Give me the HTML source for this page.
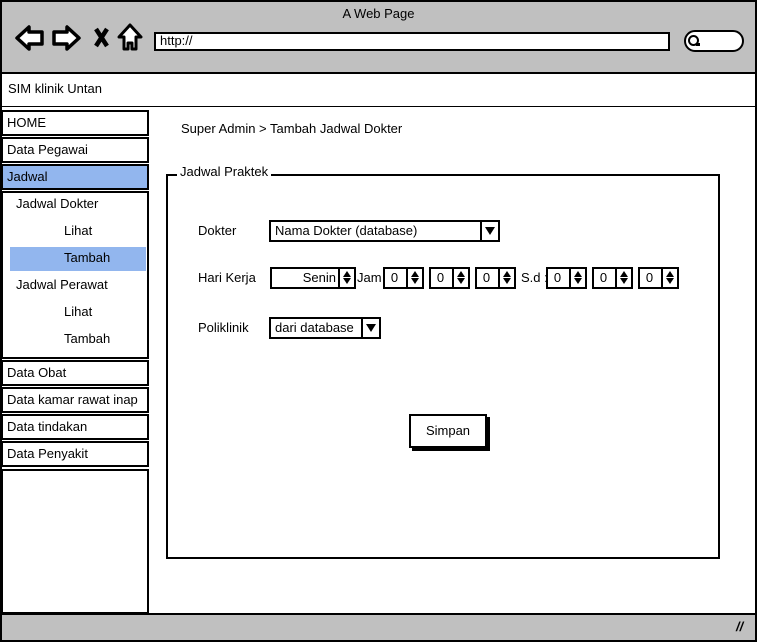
<!DOCTYPE html>
<html><head><meta charset="utf-8"><style>
*{margin:0;padding:0;box-sizing:border-box}
body{width:757px;height:642px;position:relative;background:#fff;font-family:"Liberation Sans",sans-serif;font-size:13px;color:#000;overflow:hidden}
.a{position:absolute}
.b{position:absolute;border:2px solid #000;background:#fff}
.t{position:absolute;white-space:nowrap;line-height:16px}
.m{position:absolute;left:1px;width:148px;height:26px;border:2px solid #000;background:#fff;padding-left:4px;line-height:22px}
.sp{position:absolute;height:22px;border:2px solid #000;background:#fff;top:267px}
.sp .v{position:absolute;right:18px;top:0;line-height:18px}
.sp .c{left:0;text-align:center}
.sp .k{position:absolute;right:0;top:0;width:16px;height:18px;border-left:2px solid #000}
.sp .k:before{content:"";position:absolute;left:3px;top:2px;border-left:4px solid transparent;border-right:4px solid transparent;border-bottom:6px solid #000}
.sp .k:after{content:"";position:absolute;left:3px;top:9px;border-left:4px solid transparent;border-right:4px solid transparent;border-top:6px solid #000}
.dd{position:absolute;height:22px;border:2px solid #000;background:#fff;padding-left:4px;line-height:18px}
.dd .k{position:absolute;right:0;top:0;width:18px;height:18px;border-left:2px solid #000}
.dd .k:after{content:"";position:absolute;left:3px;top:5px;border-left:5px solid transparent;border-right:5px solid transparent;border-top:8px solid #000}
</style></head><body>
<div class="a" style="left:0;top:0;width:757px;height:642px;border:2px solid #000;background:#c0c0c0"></div>
<div class="t" style="left:0;width:757px;top:6px;text-align:center">A Web Page</div>
<svg class="a" style="left:0;top:0" width="160" height="60">
<path d="M17 38 L29 27 L29 32 L42 32 L42 44 L29 44 L29 49 Z" fill="#fff" stroke="#000" stroke-width="3.5" stroke-linejoin="round"/>
<path d="M79 38 L67 27 L67 32 L54 32 L54 44 L67 44 L67 49 Z" fill="#fff" stroke="#000" stroke-width="3.5" stroke-linejoin="round"/>
<path d="M96 29 L107 46 M107 29 L96 46" stroke="#000" stroke-width="4.5"/>
<path d="M130 25 L141 37 L136 37 L136 49 L132 49 L132 43 L128 43 L128 49 L124 49 L124 37 L119 37 Z" fill="#fff" stroke="#000" stroke-width="3" stroke-linejoin="round"/>
</svg>
<div class="b" style="left:154px;top:32px;width:516px;height:19px"></div>
<div class="t" style="left:160px;top:33px">http://</div>
<div class="b" style="left:684px;top:30px;width:60px;height:22px;border-radius:11px"></div>
<div class="a" style="left:688px;top:35px;width:11px;height:11px;border:2.5px solid #000;border-radius:50%"></div>
<div class="a" style="left:696px;top:43px;width:4px;height:3px;background:#000"></div>
<div class="a" style="left:0;top:72px;width:757px;height:36px;border:2px solid #000;background:#fff"></div>
<div class="t" style="left:8px;top:81px">SIM klinik Untan</div>
<div class="a" style="left:0;top:107px;width:757px;height:508px;border:2px solid #000;border-top:none;background:#fff"></div>
<div class="m" style="top:110px">HOME</div>
<div class="m" style="top:137px">Data Pegawai</div>
<div class="m" style="top:164px;background:#92b6ee">Jadwal</div>
<div class="b" style="left:1px;top:191px;width:148px;height:168px"></div>
<div class="a" style="left:10px;top:247px;width:136px;height:24px;background:#92b6ee"></div>
<div class="t" style="left:16px;top:196px">Jadwal Dokter</div>
<div class="t" style="left:64px;top:223px">Lihat</div>
<div class="t" style="left:64px;top:250px">Tambah</div>
<div class="t" style="left:16px;top:277px">Jadwal Perawat</div>
<div class="t" style="left:64px;top:304px">Lihat</div>
<div class="t" style="left:64px;top:331px">Tambah</div>
<div class="m" style="top:360px">Data Obat</div>
<div class="m" style="top:387px">Data kamar rawat inap</div>
<div class="m" style="top:414px">Data tindakan</div>
<div class="m" style="top:441px">Data Penyakit</div>
<div class="b" style="left:1px;top:469px;width:148px;height:145px"></div>
<div class="a" style="left:0;top:613px;width:757px;height:29px;border:2px solid #000;background:#c0c0c0"></div>
<div class="t" style="left:736px;top:619px;font-weight:bold;font-style:italic">//</div>
<div class="t" style="left:181px;top:121px">Super Admin &gt; Tambah Jadwal Dokter</div>
<div class="b" style="left:166px;top:174px;width:554px;height:385px"></div>
<div class="t" style="left:177px;top:164px;background:#fff;padding:0 3px">Jadwal Praktek</div>
<div class="t" style="left:198px;top:223px">Dokter</div>
<div class="t" style="left:198px;top:270px">Hari Kerja</div>
<div class="t" style="left:198px;top:320px">Poliklinik</div>
<div class="dd" style="left:269px;top:220px;width:231px">Nama Dokter (database)<div class="k"></div></div>
<div class="dd" style="left:269px;top:317px;width:112px">dari database<div class="k"></div></div>
<div class="sp" style="left:270px;width:86px"><div class="v">Senin</div><div class="k"></div></div>
<div class="t" style="left:357px;top:270px">Jam</div>
<div class="sp" style="left:383px;width:41px"><div class="v c">0</div><div class="k"></div></div>
<div class="sp" style="left:429px;width:41px"><div class="v c">0</div><div class="k"></div></div>
<div class="sp" style="left:475px;width:41px"><div class="v c">0</div><div class="k"></div></div>
<div class="t" style="left:521px;top:270px">S.d :</div>
<div class="sp" style="left:546px;width:41px"><div class="v c">0</div><div class="k"></div></div>
<div class="sp" style="left:592px;width:41px"><div class="v c">0</div><div class="k"></div></div>
<div class="sp" style="left:638px;width:41px"><div class="v c">0</div><div class="k"></div></div>
<div class="b" style="left:409px;top:414px;width:78px;height:34px;box-shadow:3px 3px 0 #000;text-align:center;line-height:30px">Simpan</div>
</body></html>
